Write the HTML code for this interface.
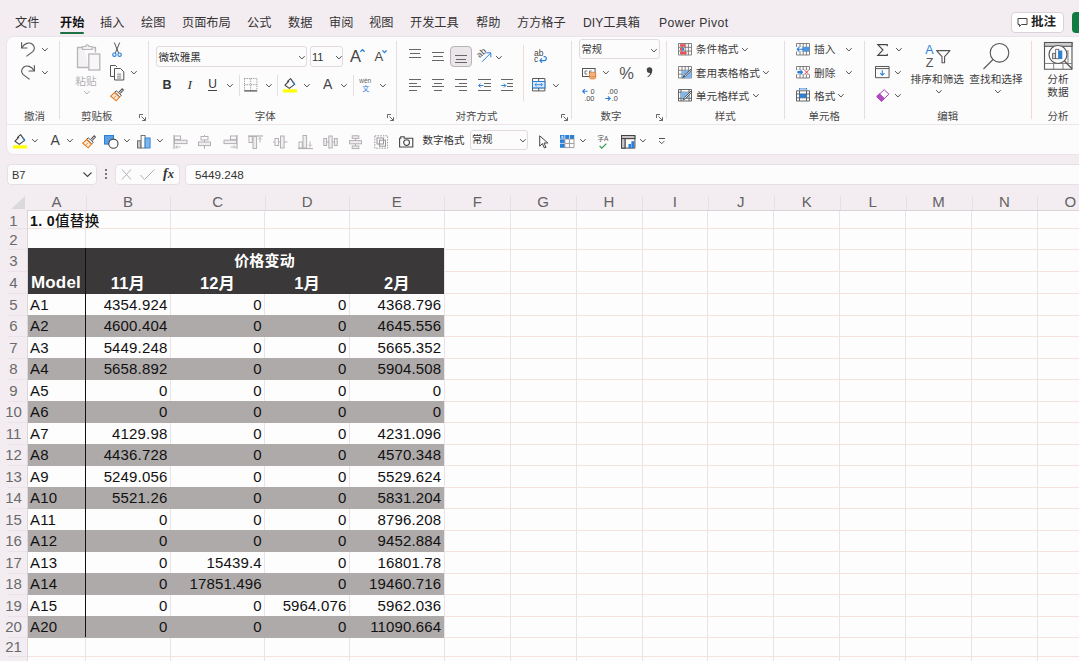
<!DOCTYPE html>
<html><head><meta charset="utf-8"><title>Excel</title>
<style>
*{box-sizing:border-box;margin:0;padding:0}
html,body{width:1079px;height:661px;overflow:hidden}
body{background:#f3edf2;font-family:"Liberation Sans","Noto Sans CJK SC",sans-serif;color:#222;position:relative;font-size:12px}
.abs{position:absolute}
.tab{position:absolute;top:15px;font-size:12.2px;line-height:16px;color:#333;white-space:nowrap}
.card{position:absolute;left:6px;top:36px;width:1090px;height:119px;background:#fdfcfd;border:1px solid #ebe4ea;border-radius:8px}
.glabel{position:absolute;top:109px;font-size:10.5px;line-height:13px;color:#4a4a4a;white-space:nowrap;transform:translateX(-50%)}
.sep{position:absolute;top:42px;width:1px;height:78px;background:#e3dde2}
.t{position:absolute;white-space:nowrap;line-height:14px}
.ch{position:absolute;top:193px;height:17px;font-size:15px;line-height:17px;color:#636363;text-align:center}
.rh{position:absolute;left:0;width:27px;font-size:15px;color:#6a6a6a;text-align:center}
.cell{position:absolute;font-size:15px;color:#111;white-space:nowrap;letter-spacing:0.15px;font-family:"Liberation Sans","Noto Sans CJK SC",sans-serif}
.num{text-align:right}
.hl{position:absolute;height:1px;background:#f3e3dc}
.vl{position:absolute;width:1px;background:#ece3ea}
svg{position:absolute;overflow:visible}
</style></head><body>

<div class="tab" style="left:15px">文件</div>
<div class="tab" style="left:60px;font-weight:bold;color:#111">开始</div>
<div class="tab" style="left:100px">插入</div>
<div class="tab" style="left:141px">绘图</div>
<div class="tab" style="left:182px">页面布局</div>
<div class="tab" style="left:247px">公式</div>
<div class="tab" style="left:288px">数据</div>
<div class="tab" style="left:329px">审阅</div>
<div class="tab" style="left:369px">视图</div>
<div class="tab" style="left:410px">开发工具</div>
<div class="tab" style="left:476px">帮助</div>
<div class="tab" style="left:517px">方方格子</div>
<div class="tab" style="left:583px">DIY工具箱</div>
<div class="tab" style="left:659px;letter-spacing:0.4px">Power Pivot</div>
<div class="abs" style="left:60px;top:31.5px;width:24px;height:2px;background:#1e7145;border-radius:1px"></div>
<div class="abs" style="left:1011px;top:12px;width:53px;height:21px;background:#fff;border:1px solid #d9d2d8;border-radius:4px"></div>
<svg style="left:1017px;top:17px" width="11" height="11" viewBox="0 0 11 11"><path d="M1 1.5h9v6h-5.5l-2 2v-2h-1.5z" fill="none" stroke="#444" stroke-width="1"/></svg>
<div class="t" style="left:1031px;top:15px;font-size:12.5px;font-weight:bold;color:#222">批注</div>
<div class="abs" style="left:1072px;top:12px;width:20px;height:21px;background:#107c41;border-radius:4px"></div>
<div class="card"></div>
<div class="abs" style="left:7px;top:124px;width:1072px;height:1px;background:#ece5ea"></div>
<svg style="left:21.0px;top:42.0px" width="14" height="15" viewBox="0 0 14 15"><path d="M0.6 0.3V6H6.4" fill="none" stroke="#555" stroke-width="1.1"/><path d="M0.9 5.7C3.2 1.2 8.2 -0.2 11.4 2.3C14 4.4 13.9 7.6 11.8 9.7L5.4 14.4" fill="none" stroke="#555" stroke-width="1.1"/></svg>
<svg style="left:42.1px;top:47.8px" width="5.8" height="3.4" viewBox="0 0 5.8 3.4"><path d="M0.4 0.4L2.90 3.00L5.40 0.4" fill="none" stroke="#505050" stroke-width="1.0" stroke-linecap="round" stroke-linejoin="round"/></svg>
<svg style="left:21.0px;top:64.5px" width="14" height="15" viewBox="0 0 14 15"><path d="M13.4 0.3V6H7.6" fill="none" stroke="#555" stroke-width="1.1"/><path d="M13.1 5.7C10.8 1.2 5.8 -0.2 2.6 2.3C0 4.4 0.1 7.6 2.2 9.7L8.6 14.4" fill="none" stroke="#555" stroke-width="1.1"/></svg>
<svg style="left:42.1px;top:70.8px" width="5.8" height="3.4" viewBox="0 0 5.8 3.4"><path d="M0.4 0.4L2.90 3.00L5.40 0.4" fill="none" stroke="#505050" stroke-width="1.0" stroke-linecap="round" stroke-linejoin="round"/></svg>
<div class="glabel" style="left:34.4px;top:109.5px">撤消</div>
<div class="abs" style="left:59.3px;top:41.0px;width:1px;height:78.0px;background:#e6dee4"></div>
<svg style="left:75.5px;top:43.5px" width="25" height="27" viewBox="0 0 25 27"><path d="M8 3.5h-6.5v20h11M17 3.5h2.5v5" fill="#f3f1f3" stroke="#b8b4b8" stroke-width="1.3"/><path d="M6.5 5.5v-3h3.2a1.6 1.6 0 0 1 3.2 0h3.2v3z" fill="#f3f1f3" stroke="#b8b4b8" stroke-width="1.2"/><rect x="12.8" y="10" width="11" height="16" fill="#f8f6f8" stroke="#b8b4b8" stroke-width="1.3"/></svg>
<div class="t" style="left:86.0px;top:73.5px;font-size:10.7px;color:#b3afb3;transform:translateX(-50%);">粘贴</div>
<svg style="left:84.1px;top:91.3px" width="5.8" height="3.4" viewBox="0 0 5.8 3.4"><path d="M0.4 0.4L2.90 3.00L5.40 0.4" fill="none" stroke="#b3afb3" stroke-width="1.0" stroke-linecap="round" stroke-linejoin="round"/></svg>
<svg style="left:112.0px;top:42.0px" width="10" height="15.5" viewBox="0 0 10 15.5"><path d="M2.3 0.5L6.6 11M7.7 0.5L3.4 11" fill="none" stroke="#555" stroke-width="1"/><circle cx="2.4" cy="12.7" r="1.7" fill="none" stroke="#2a7fd6" stroke-width="1.1"/><circle cx="7.6" cy="12.7" r="1.7" fill="none" stroke="#2a7fd6" stroke-width="1.1"/></svg>
<svg style="left:110.0px;top:65.0px" width="14.5" height="15.5" viewBox="0 0 14.5 15.5"><path d="M4.5 11.5h-4v-11h5l1.5 1.5" fill="none" stroke="#555" stroke-width="1"/><path d="M4.5 3.5h6l3.3 3.3v8.2h-9.3z" fill="#fdfcfd" stroke="#555" stroke-width="1"/><path d="M7.2 9.2h4M7.2 11.2h4M7.2 13.1h4" stroke="#555" stroke-width="0.7"/></svg>
<svg style="left:130.6px;top:70.8px" width="5.8" height="3.4" viewBox="0 0 5.8 3.4"><path d="M0.4 0.4L2.90 3.00L5.40 0.4" fill="none" stroke="#505050" stroke-width="1.0" stroke-linecap="round" stroke-linejoin="round"/></svg>
<svg style="left:110.3px;top:88.0px" width="14" height="13.5" viewBox="0 0 14 13.5"><path d="M9 4.2L12.2 0.8L13.4 2L10.3 5.4" fill="none" stroke="#555" stroke-width="1.1"/><path d="M6.2 2.8L11.3 7.2L9.8 8.8L4.7 4.4z" fill="#fdfcfd" stroke="#555" stroke-width="1"/><path d="M4.5 4.6L0.7 8.2L6.2 12.8L9.6 9z" fill="#fbe6d4" stroke="#e07a1f" stroke-width="1.1"/><path d="M3.4 10.4L6 8" stroke="#e07a1f" stroke-width="0.7"/></svg>
<div class="glabel" style="left:96.7px;top:109.5px">剪贴板</div>
<svg style="left:138.5px;top:114.0px" width="7" height="7" viewBox="0 0 7 7"><path d="M0.5 4V0.5H4M2.5 2.5L6.3 6.3M6.5 3.2V6.5H3.2" fill="none" stroke="#555" stroke-width="0.9"/></svg>
<div class="abs" style="left:148.0px;top:41.0px;width:1px;height:78.0px;background:#e6dee4"></div>
<div class="abs" style="left:156.0px;top:46.0px;width:150.7px;height:21.3px;background:#fdfcfd;border:1px solid #e3d9e0;border-radius:3px"></div>
<div class="t" style="left:158.5px;top:50.0px;font-size:10.6px;color:#333;">微软雅黑</div>
<svg style="left:299.1px;top:55.6px" width="5.8" height="3.4" viewBox="0 0 5.8 3.4"><path d="M0.4 0.4L2.90 3.00L5.40 0.4" fill="none" stroke="#505050" stroke-width="1.0" stroke-linecap="round" stroke-linejoin="round"/></svg>
<div class="abs" style="left:309.5px;top:46.0px;width:33.9px;height:21.3px;background:#fdfcfd;border:1px solid #e3d9e0;border-radius:3px"></div>
<div class="t" style="left:312.0px;top:50.0px;font-size:11.0px;color:#333;">11</div>
<svg style="left:335.8px;top:55.6px" width="5.8" height="3.4" viewBox="0 0 5.8 3.4"><path d="M0.4 0.4L2.90 3.00L5.40 0.4" fill="none" stroke="#505050" stroke-width="1.0" stroke-linecap="round" stroke-linejoin="round"/></svg>
<div class="t" style="left:350.0px;top:48.5px;font-size:16.5px;color:#444;line-height:18px;margin-top:-2px">A</div>
<svg style="left:359.6px;top:49.3px" width="5" height="3.2" viewBox="0 0 5 3.2"><path d="M0.4 2.8L2.5 0.6L4.6 2.8" fill="none" stroke="#2a7fd6" stroke-width="1.3"/></svg>
<div class="t" style="left:374.4px;top:50.0px;font-size:13.0px;color:#444;line-height:14px">A</div>
<svg style="left:382.4px;top:49.6px" width="5" height="3.2" viewBox="0 0 5 3.2"><path d="M0.4 0.4L2.5 2.6L4.6 0.4" fill="none" stroke="#2a7fd6" stroke-width="1.3"/></svg>
<div class="t" style="left:167.0px;top:77.5px;font-size:12.5px;color:#333;transform:translateX(-50%);font-weight:bold">B</div>
<div class="t" style="left:189.8px;top:77.5px;font-size:12.5px;color:#333;transform:translateX(-50%);font-style:italic;font-family:'Liberation Serif',serif;font-size:13.5px">I</div>
<div class="t" style="left:212.5px;top:77.2px;font-size:12.0px;color:#333;transform:translateX(-50%);">U</div>
<div class="abs" style="left:208.3px;top:90px;width:8.4px;height:1px;background:#444"></div>
<svg style="left:226.7px;top:83.8px" width="5.8" height="3.4" viewBox="0 0 5.8 3.4"><path d="M0.4 0.4L2.90 3.00L5.40 0.4" fill="none" stroke="#505050" stroke-width="1.0" stroke-linecap="round" stroke-linejoin="round"/></svg>
<div class="abs" style="left:239.1px;top:75.0px;width:1px;height:21.0px;background:#e6dee4"></div>
<svg style="left:244.4px;top:78.4px" width="13.4" height="13.4" viewBox="0 0 13.4 13.4"><path d="M0.5 0.5h12.4v12.4h-12.4zM6.7 0.5v12.4M0.5 6.7h12.4" fill="none" stroke="#8f8b8f" stroke-width="0.9" stroke-dasharray="1.2 1"/><path d="M0.3 12.9h12.8" stroke="#555" stroke-width="1.2"/></svg>
<svg style="left:265.6px;top:83.8px" width="5.8" height="3.4" viewBox="0 0 5.8 3.4"><path d="M0.4 0.4L2.90 3.00L5.40 0.4" fill="none" stroke="#505050" stroke-width="1.0" stroke-linecap="round" stroke-linejoin="round"/></svg>
<div class="abs" style="left:276.9px;top:75.0px;width:1px;height:21.0px;background:#e6dee4"></div>
<svg style="left:283.3px;top:77.7px" width="14" height="15" viewBox="0 0 14 15"><path d="M4.2 3.6L7.6 0.6L11.6 6.4L6.3 10.4L2 7.2L6 3" fill="none" stroke="#444" stroke-width="1.1" stroke-linejoin="round"/><path d="M9.6 3.4c1.7 0.1 2.8 1.5 2.7 4.2c-0.5-1-1.2-1.6-2.2-1.9z" fill="#2a7fd6"/><rect x="0" y="11.3" width="14" height="3.2" fill="#ffff00"/></svg>
<svg style="left:304.4px;top:83.8px" width="5.8" height="3.4" viewBox="0 0 5.8 3.4"><path d="M0.4 0.4L2.90 3.00L5.40 0.4" fill="none" stroke="#505050" stroke-width="1.0" stroke-linecap="round" stroke-linejoin="round"/></svg>
<div class="t" style="left:323.0px;top:76.5px;font-size:14.0px;color:#444;line-height:15px">A</div>
<svg style="left:340.7px;top:83.8px" width="5.8" height="3.4" viewBox="0 0 5.8 3.4"><path d="M0.4 0.4L2.90 3.00L5.40 0.4" fill="none" stroke="#505050" stroke-width="1.0" stroke-linecap="round" stroke-linejoin="round"/></svg>
<div class="abs" style="left:352.7px;top:75.0px;width:1px;height:21.0px;background:#e6dee4"></div>
<div class="t" style="left:359.3px;top:74.3px;font-size:6.5px;color:#666;line-height:8px;margin-top:3px">wén</div>
<div class="t" style="left:362.3px;top:82.2px;font-size:7.0px;color:#2a7fd6;line-height:8px;margin-top:3px">文</div>
<svg style="left:379.5px;top:83.8px" width="5.8" height="3.4" viewBox="0 0 5.8 3.4"><path d="M0.4 0.4L2.90 3.00L5.40 0.4" fill="none" stroke="#505050" stroke-width="1.0" stroke-linecap="round" stroke-linejoin="round"/></svg>
<div class="glabel" style="left:265.3px;top:109.5px">字体</div>
<svg style="left:386.5px;top:114.0px" width="7" height="7" viewBox="0 0 7 7"><path d="M0.5 4V0.5H4M2.5 2.5L6.3 6.3M6.5 3.2V6.5H3.2" fill="none" stroke="#555" stroke-width="0.9"/></svg>
<div class="abs" style="left:396.2px;top:41.0px;width:1px;height:78.0px;background:#e6dee4"></div>
<div class="abs" style="left:408.5px;top:49.0px;width:12.8px;height:1.1px;background:#666"></div>
<div class="abs" style="left:410.0px;top:52.9px;width:9.8px;height:1.1px;background:#666"></div>
<div class="abs" style="left:408.5px;top:56.6px;width:12.8px;height:1.1px;background:#666"></div>
<div class="abs" style="left:431.6px;top:51.8px;width:12.8px;height:1.1px;background:#666"></div>
<div class="abs" style="left:433.1px;top:55.7px;width:9.8px;height:1.1px;background:#666"></div>
<div class="abs" style="left:431.6px;top:59.5px;width:12.8px;height:1.1px;background:#666"></div>
<div class="abs" style="left:450.4px;top:46.0px;width:21.4px;height:21.3px;background:#ebe6ea;border:1px solid #b8b3b7;border-radius:4px"></div>
<div class="abs" style="left:454.7px;top:55.0px;width:12.8px;height:1.1px;background:#666"></div>
<div class="abs" style="left:456.2px;top:58.7px;width:9.8px;height:1.1px;background:#666"></div>
<div class="abs" style="left:454.7px;top:62.2px;width:12.8px;height:1.1px;background:#666"></div>
<svg style="left:477.0px;top:49.0px" width="15" height="13.5" viewBox="0 0 15 13.5"><text x="0" y="0" font-size="8.6" font-family="Liberation Sans,sans-serif" fill="#444" transform="translate(2.6 9.2) rotate(-42)">ab</text><path d="M5 12.8L13.6 4.2M9.4 3.8h4.4v4.4" fill="none" stroke="#2a7fd6" stroke-width="1"/></svg>
<svg style="left:496.4px;top:55.6px" width="5.8" height="3.4" viewBox="0 0 5.8 3.4"><path d="M0.4 0.4L2.90 3.00L5.40 0.4" fill="none" stroke="#505050" stroke-width="1.0" stroke-linecap="round" stroke-linejoin="round"/></svg>
<div class="abs" style="left:408.5px;top:79.0px;width:12.8px;height:1.1px;background:#666"></div>
<div class="abs" style="left:408.5px;top:82.7px;width:8.3px;height:1.1px;background:#666"></div>
<div class="abs" style="left:408.5px;top:86.2px;width:12.8px;height:1.1px;background:#666"></div>
<div class="abs" style="left:408.5px;top:90.0px;width:8.3px;height:1.1px;background:#666"></div>
<div class="abs" style="left:431.6px;top:79.0px;width:12.8px;height:1.1px;background:#666"></div>
<div class="abs" style="left:433.6px;top:82.7px;width:8.8px;height:1.1px;background:#666"></div>
<div class="abs" style="left:431.6px;top:86.2px;width:12.8px;height:1.1px;background:#666"></div>
<div class="abs" style="left:433.6px;top:90.0px;width:8.8px;height:1.1px;background:#666"></div>
<div class="abs" style="left:454.5px;top:79.0px;width:12.8px;height:1.1px;background:#666"></div>
<div class="abs" style="left:459.0px;top:82.7px;width:8.3px;height:1.1px;background:#666"></div>
<div class="abs" style="left:454.5px;top:86.2px;width:12.8px;height:1.1px;background:#666"></div>
<div class="abs" style="left:459.0px;top:90.0px;width:8.3px;height:1.1px;background:#666"></div>
<div class="abs" style="left:477.8px;top:79.0px;width:12.8px;height:1.1px;background:#666"></div>
<div class="abs" style="left:483.8px;top:82.7px;width:6.8px;height:1.1px;background:#666"></div>
<div class="abs" style="left:483.8px;top:86.2px;width:6.8px;height:1.1px;background:#666"></div>
<div class="abs" style="left:477.8px;top:90.0px;width:12.8px;height:1.1px;background:#666"></div>
<svg style="left:477.8px;top:82.5px" width="5.5" height="5" viewBox="0 0 5.5 5"><path d="M5.3 2.5H0.8M2.6 0.5L0.6 2.5L2.6 4.5" fill="none" stroke="#2a7fd6" stroke-width="1"/></svg>
<div class="abs" style="left:500.7px;top:79.0px;width:12.8px;height:1.1px;background:#666"></div>
<div class="abs" style="left:506.7px;top:82.7px;width:6.8px;height:1.1px;background:#666"></div>
<div class="abs" style="left:506.7px;top:86.2px;width:6.8px;height:1.1px;background:#666"></div>
<div class="abs" style="left:500.7px;top:90.0px;width:12.8px;height:1.1px;background:#666"></div>
<svg style="left:500.7px;top:82.5px" width="5.5" height="5" viewBox="0 0 5.5 5"><path d="M0.2 2.5H4.7M2.9 0.5L4.9 2.5L2.9 4.5" fill="none" stroke="#2a7fd6" stroke-width="1"/></svg>
<div class="abs" style="left:522.5px;top:45.0px;width:1px;height:55.7px;background:#f0ddd2"></div>
<div class="t" style="left:534.0px;top:46.5px;font-size:8.5px;color:#444;line-height:9px;margin-top:2.5px">ab</div>
<div class="t" style="left:534.0px;top:52.8px;font-size:8.5px;color:#444;line-height:9px;margin-top:2.5px">c</div>
<svg style="left:538.6px;top:56.2px" width="8" height="7.5" viewBox="0 0 8 7.5"><path d="M4.6 0.6h0.8c2.6 0 2.6 4 0 4H1M3 2.4L0.9 4.6L3 6.8" fill="none" stroke="#2a7fd6" stroke-width="1.1"/></svg>
<svg style="left:532.0px;top:78.2px" width="13.4" height="13.4" viewBox="0 0 13.4 13.4"><path d="M0.5 0.5h12.4v12.4h-12.4zM0.5 3.5h12.4M0.5 9.9h12.4M6.7 0.5v3M6.7 9.9v3" fill="none" stroke="#555" stroke-width="1"/><rect x="0.5" y="3.5" width="12.4" height="6.4" fill="#dbeaf9" stroke="#2a7fd6" stroke-width="1"/><path d="M3 6.7h7.4M4.6 5.1L3 6.7L4.6 8.3M8.8 5.1L10.4 6.7L8.8 8.3" fill="none" stroke="#2a7fd6" stroke-width="0.9"/></svg>
<svg style="left:552.9px;top:83.8px" width="5.8" height="3.4" viewBox="0 0 5.8 3.4"><path d="M0.4 0.4L2.90 3.00L5.40 0.4" fill="none" stroke="#505050" stroke-width="1.0" stroke-linecap="round" stroke-linejoin="round"/></svg>
<div class="glabel" style="left:476.4px;top:109.5px">对齐方式</div>
<svg style="left:561.0px;top:114.0px" width="7" height="7" viewBox="0 0 7 7"><path d="M0.5 4V0.5H4M2.5 2.5L6.3 6.3M6.5 3.2V6.5H3.2" fill="none" stroke="#555" stroke-width="0.9"/></svg>
<div class="abs" style="left:570.5px;top:41.0px;width:1px;height:78.0px;background:#e6dee4"></div>
<div class="abs" style="left:578.7px;top:39.0px;width:80.9px;height:20.0px;background:#fdfcfd;border:1px solid #e3d9e0;border-radius:3px"></div>
<div class="t" style="left:581.5px;top:43.0px;font-size:10.3px;color:#333;">常规</div>
<svg style="left:651.1px;top:48.6px" width="5.8" height="3.4" viewBox="0 0 5.8 3.4"><path d="M0.4 0.4L2.90 3.00L5.40 0.4" fill="none" stroke="#505050" stroke-width="1.0" stroke-linecap="round" stroke-linejoin="round"/></svg>
<svg style="left:582.0px;top:67.7px" width="14.5" height="11.5" viewBox="0 0 14.5 11.5"><rect x="0.5" y="0.5" width="12.6" height="8" fill="#fdfcfd" stroke="#555" stroke-width="1"/><path d="M3 3h2.2M3 6h2.2M3 3v3M7.5 3h2.2M7.5 3v3" stroke="#555" stroke-width="0.8" fill="none"/><ellipse cx="10.6" cy="5.5" rx="3.1" ry="1.3" fill="#f4b183" stroke="#e07a1f" stroke-width="0.8"/><path d="M7.5 5.5v4.2c0 1.7 6.2 1.7 6.2 0v-4.2" fill="#f4b183" stroke="#e07a1f" stroke-width="0.8"/><path d="M7.5 7.6c0 1.6 6.2 1.6 6.2 0" fill="none" stroke="#e07a1f" stroke-width="0.8"/></svg>
<svg style="left:603.1px;top:70.8px" width="5.8" height="3.4" viewBox="0 0 5.8 3.4"><path d="M0.4 0.4L2.90 3.00L5.40 0.4" fill="none" stroke="#505050" stroke-width="1.0" stroke-linecap="round" stroke-linejoin="round"/></svg>
<div class="t" style="left:619.2px;top:65.5px;font-size:16.5px;color:#555;line-height:18px;margin-top:-2px">%</div>
<svg style="left:645.7px;top:67.3px" width="7" height="10.5" viewBox="0 0 7 10.5"><path d="M3.4 0.3a2.7 2.7 0 0 1 2.9 2.9c0 3-1.8 5.6-4.4 7l-0.5-0.7c1.6-1 2.5-2.2 2.7-3.6c-2 0.3-3.3-0.9-3.3-2.7a2.7 2.7 0 0 1 2.6-2.9z" fill="#444"/></svg>
<svg style="left:582.3px;top:88.0px" width="13.5" height="13.5" viewBox="0 0 13.5 13.5"><path d="M5.6 3.3H0.8M2.9 1.1L0.7 3.3L2.9 5.5" fill="none" stroke="#2a7fd6" stroke-width="1.1"/><text x="8.6" y="6" font-size="7.3" font-family="Liberation Sans,sans-serif" fill="#444">0</text><text x="2.2" y="13.3" font-size="7.3" font-family="Liberation Sans,sans-serif" fill="#444">.00</text></svg>
<svg style="left:605.4px;top:88.0px" width="13.8" height="13.5" viewBox="0 0 13.8 13.5"><text x="2.6" y="6" font-size="7.3" font-family="Liberation Sans,sans-serif" fill="#444">.00</text><path d="M0.3 10.5H5.1M3 8.3L5.2 10.5L3 12.7" fill="none" stroke="#2a7fd6" stroke-width="1.1"/><text x="6.8" y="13.3" font-size="7.3" font-family="Liberation Sans,sans-serif" fill="#444">.0</text></svg>
<div class="glabel" style="left:611.0px;top:109.5px">数字</div>
<svg style="left:656.3px;top:114.0px" width="7" height="7" viewBox="0 0 7 7"><path d="M0.5 4V0.5H4M2.5 2.5L6.3 6.3M6.5 3.2V6.5H3.2" fill="none" stroke="#555" stroke-width="0.9"/></svg>
<div class="abs" style="left:665.9px;top:41.0px;width:1px;height:78.0px;background:#e6dee4"></div>
<svg style="left:678.0px;top:43.2px" width="14" height="12.5" viewBox="0 0 14 12.5"><path d="M0.5 0.5h13v11.5h-13zM0.5 4.3h13M0.5 8.1h13M4 0.5v11.5M7.2 0.5v11.5M10.4 0.5v11.5" fill="#fdfcfd" stroke="#666" stroke-width="0.8"/><rect x="2" y="1.2" width="5.4" height="2.5" fill="#e8505b"/><rect x="2" y="5" width="2.4" height="2.5" fill="#e8505b"/><rect x="4.4" y="5" width="1.6" height="2.5" fill="#2a7fd6"/><rect x="2" y="8.8" width="6.6" height="2.5" fill="#e8505b"/></svg>
<div class="t" style="left:695.8px;top:42.3px;font-size:10.7px;color:#3d3d3d;">条件格式</div>
<svg style="left:741.8px;top:47.8px" width="5.8" height="3.4" viewBox="0 0 5.8 3.4"><path d="M0.4 0.4L2.90 3.00L5.40 0.4" fill="none" stroke="#505050" stroke-width="1.0" stroke-linecap="round" stroke-linejoin="round"/></svg>
<svg style="left:678.0px;top:66.3px" width="14" height="12.5" viewBox="0 0 14 12.5"><path d="M0.5 0.5h13v11.5h-13zM0.5 4.3h13M0.5 8.1h13M4 0.5v11.5M7.2 0.5v11.5M10.4 0.5v11.5" fill="#fdfcfd" stroke="#666" stroke-width="0.8"/><path d="M4.2 4.5h9.3v7.5h-9.3z" fill="#7fb6ec"/><path d="M12.8 3.2L6.5 9.2L4.8 11.6L7.4 10.2L13.6 4.2z" fill="#fdfcfd" stroke="#444" stroke-width="0.9"/></svg>
<div class="t" style="left:695.8px;top:65.5px;font-size:10.7px;color:#3d3d3d;">套用表格格式</div>
<svg style="left:762.9px;top:71.0px" width="5.8" height="3.4" viewBox="0 0 5.8 3.4"><path d="M0.4 0.4L2.90 3.00L5.40 0.4" fill="none" stroke="#505050" stroke-width="1.0" stroke-linecap="round" stroke-linejoin="round"/></svg>
<svg style="left:678.0px;top:88.9px" width="14" height="12.5" viewBox="0 0 14 12.5"><path d="M0.5 0.5h13v11.5h-13zM0.5 3.2h13M0.5 9.3h13M3 0.5v11.5M11 0.5v11.5" fill="#fdfcfd" stroke="#555" stroke-width="0.9"/><rect x="3" y="3.2" width="8" height="6.1" fill="#7fb6ec"/><path d="M12.8 2.2L6.5 8.7L4.8 11.2L7.4 9.8L13.6 3.2z" fill="#fdfcfd" stroke="#444" stroke-width="0.9"/></svg>
<div class="t" style="left:695.8px;top:88.5px;font-size:10.7px;color:#3d3d3d;">单元格样式</div>
<svg style="left:752.5px;top:94.0px" width="5.8" height="3.4" viewBox="0 0 5.8 3.4"><path d="M0.4 0.4L2.90 3.00L5.40 0.4" fill="none" stroke="#505050" stroke-width="1.0" stroke-linecap="round" stroke-linejoin="round"/></svg>
<div class="glabel" style="left:725.2px;top:109.5px">样式</div>
<div class="abs" style="left:784.1px;top:41.0px;width:1px;height:78.0px;background:#e6dee4"></div>
<svg style="left:795.7px;top:43.2px" width="14" height="12.5" viewBox="0 0 14 12.5"><path d="M0.5 0.5h13v11.5h-13zM0.5 4.3h13M0.5 8.1h13M4 0.5v11.5M7.2 0.5v11.5M10.4 0.5v11.5" fill="#fdfcfd" stroke="#666" stroke-width="0.8"/><rect x="0" y="3.9" width="7" height="4.6" fill="#fdfcfd"/><rect x="6.2" y="4" width="7.2" height="4.3" fill="#4a96e4"/><path d="M7.5 6.2H1.2M3.4 4.1L1.2 6.2L3.4 8.3" fill="none" stroke="#2a7fd6" stroke-width="1.1"/></svg>
<div class="t" style="left:814.0px;top:42.3px;font-size:10.7px;color:#3d3d3d;">插入</div>
<svg style="left:846.1px;top:47.8px" width="5.8" height="3.4" viewBox="0 0 5.8 3.4"><path d="M0.4 0.4L2.90 3.00L5.40 0.4" fill="none" stroke="#505050" stroke-width="1.0" stroke-linecap="round" stroke-linejoin="round"/></svg>
<svg style="left:795.7px;top:66.3px" width="14" height="12.5" viewBox="0 0 14 12.5"><path d="M0.5 0.5h13v11.5h-13zM0.5 4.3h13M0.5 8.1h13M4 0.5v11.5M7.2 0.5v11.5M10.4 0.5v11.5" fill="#fdfcfd" stroke="#666" stroke-width="0.8"/><rect x="0" y="4" width="14" height="4.4" fill="#fdfcfd"/><path d="M1 6.2h5.5M4.6 4.3L6.5 6.2L4.6 8.1" fill="none" stroke="#2a7fd6" stroke-width="1.2"/><rect x="2" y="4.9" width="3" height="2.6" fill="#2a7fd6"/><path d="M8.6 4.2l4 4M12.6 4.2l-4 4" stroke="#e8303b" stroke-width="1"/></svg>
<div class="t" style="left:814.0px;top:65.5px;font-size:10.7px;color:#3d3d3d;">删除</div>
<svg style="left:846.1px;top:71.0px" width="5.8" height="3.4" viewBox="0 0 5.8 3.4"><path d="M0.4 0.4L2.90 3.00L5.40 0.4" fill="none" stroke="#505050" stroke-width="1.0" stroke-linecap="round" stroke-linejoin="round"/></svg>
<svg style="left:795.7px;top:88.0px" width="14" height="13.5" viewBox="0 0 14 13.5"><path d="M0.5 2.8h13v10.2h-13zM0.5 6h13M0.5 9.8h13M3.5 2.8v10.2M10.5 2.8v10.2" fill="#fdfcfd" stroke="#555" stroke-width="0.9"/><rect x="3.5" y="6" width="7" height="3.8" fill="#2a7fd6"/><path d="M3.5 0.9h7M3.5 0v1.8M10.5 0v1.8" stroke="#2a7fd6" stroke-width="0.9"/></svg>
<div class="t" style="left:814.0px;top:88.5px;font-size:10.7px;color:#3d3d3d;">格式</div>
<svg style="left:838.1px;top:94.0px" width="5.8" height="3.4" viewBox="0 0 5.8 3.4"><path d="M0.4 0.4L2.90 3.00L5.40 0.4" fill="none" stroke="#505050" stroke-width="1.0" stroke-linecap="round" stroke-linejoin="round"/></svg>
<div class="glabel" style="left:824.2px;top:109.5px">单元格</div>
<div class="abs" style="left:863.9px;top:41.0px;width:1px;height:78.0px;background:#e6dee4"></div>
<svg style="left:877.4px;top:43.6px" width="11" height="12" viewBox="0 0 11 12"><path d="M10.3 2.2V0.6H0.8L6 6L0.8 11.4H10.3V9.8" fill="none" stroke="#444" stroke-width="1.1" stroke-linejoin="miter"/></svg>
<svg style="left:896.4px;top:47.8px" width="5.8" height="3.4" viewBox="0 0 5.8 3.4"><path d="M0.4 0.4L2.90 3.00L5.40 0.4" fill="none" stroke="#505050" stroke-width="1.0" stroke-linecap="round" stroke-linejoin="round"/></svg>
<svg style="left:875.3px;top:66.3px" width="14.6" height="12.2" viewBox="0 0 14.6 12.2"><path d="M0.5 0.5h13.6v11.2h-13.6zM0.5 2.6h13.6" fill="#fdfcfd" stroke="#555" stroke-width="1"/><path d="M7.3 4.2v5M5.2 7.2L7.3 9.3L9.4 7.2" fill="none" stroke="#2a7fd6" stroke-width="1.1"/></svg>
<svg style="left:895.1px;top:71.0px" width="5.8" height="3.4" viewBox="0 0 5.8 3.4"><path d="M0.4 0.4L2.90 3.00L5.40 0.4" fill="none" stroke="#505050" stroke-width="1.0" stroke-linecap="round" stroke-linejoin="round"/></svg>
<svg style="left:875.7px;top:88.9px" width="13.6" height="12.8" viewBox="0 0 13.6 12.8"><path d="M8.2 0.7L12.9 5.2L5.6 12.2L0.8 7.6z" fill="#fdfcfd" stroke="#a040b0" stroke-width="1"/><path d="M3.6 4.9L8.3 9.5L5.6 12.2L0.8 7.6z" fill="#b34cc4" stroke="#a040b0" stroke-width="1"/></svg>
<svg style="left:895.1px;top:94.0px" width="5.8" height="3.4" viewBox="0 0 5.8 3.4"><path d="M0.4 0.4L2.90 3.00L5.40 0.4" fill="none" stroke="#505050" stroke-width="1.0" stroke-linecap="round" stroke-linejoin="round"/></svg>
<div class="t" style="left:925.2px;top:42.5px;font-size:12.5px;color:#2a7fd6;line-height:14px">A</div>
<div class="t" style="left:925.7px;top:55.8px;font-size:12.5px;color:#555;line-height:14px">Z</div>
<svg style="left:936.0px;top:50.0px" width="14.6" height="13.4" viewBox="0 0 14.6 13.4"><path d="M0.6 0.6H14L8.6 6.6V12.8H6V6.6z" fill="none" stroke="#555" stroke-width="1.1" stroke-linejoin="round"/></svg>
<div class="t" style="left:937.3px;top:72.0px;font-size:10.7px;color:#3d3d3d;transform:translateX(-50%);">排序和筛选</div>
<svg style="left:935.6px;top:90.3px" width="5.8" height="3.4" viewBox="0 0 5.8 3.4"><path d="M0.4 0.4L2.90 3.00L5.40 0.4" fill="none" stroke="#505050" stroke-width="1.0" stroke-linecap="round" stroke-linejoin="round"/></svg>
<svg style="left:983.0px;top:43.0px" width="27" height="27" viewBox="0 0 27 27"><circle cx="16.5" cy="9.8" r="9.3" fill="none" stroke="#555" stroke-width="1.1"/><path d="M10 16.5L0.5 26" stroke="#555" stroke-width="1.1"/></svg>
<div class="t" style="left:996.0px;top:72.0px;font-size:10.7px;color:#3d3d3d;transform:translateX(-50%);">查找和选择</div>
<svg style="left:994.6px;top:90.3px" width="5.8" height="3.4" viewBox="0 0 5.8 3.4"><path d="M0.4 0.4L2.90 3.00L5.40 0.4" fill="none" stroke="#505050" stroke-width="1.0" stroke-linecap="round" stroke-linejoin="round"/></svg>
<div class="glabel" style="left:947.8px;top:109.5px">编辑</div>
<div class="abs" style="left:1031.3px;top:41.0px;width:1px;height:78.0px;background:#f0ddd2"></div>
<svg style="left:1044.0px;top:42.3px" width="28.5" height="27.7" viewBox="0 0 28.5 27.7"><path d="M0.5 0.5h27.5v26.7h-27.5z" fill="#fdfcfd" stroke="#555" stroke-width="1.1"/><rect x="0.5" y="0.5" width="27.5" height="3.8" fill="#d0cdd0" stroke="#555" stroke-width="1.1"/><path d="M0.5 21.5h27.5M9.7 21.5v5.7M19 21.5v5.7M24 8v13" stroke="#777" stroke-width="0.9"/><circle cx="14" cy="12.5" r="9" fill="#fdfcfd" stroke="#555" stroke-width="1.2"/><rect x="8.6" y="11.3" width="3.1" height="5.4" fill="#d0cdd0" stroke="#555" stroke-width="0.8"/><rect x="11.7" y="7.3" width="3.1" height="9.4" fill="#fdfcfd" stroke="#555" stroke-width="0.8"/><rect x="14.8" y="9" width="3.1" height="7.7" fill="#2a7fd6" stroke="#2a7fd6" stroke-width="0.8"/><path d="M20.5 19L28 26.7" stroke="#555" stroke-width="1.3"/></svg>
<div class="t" style="left:1058.0px;top:72.0px;font-size:10.7px;color:#3d3d3d;transform:translateX(-50%);">分析</div>
<div class="t" style="left:1058.0px;top:84.8px;font-size:10.7px;color:#3d3d3d;transform:translateX(-50%);">数据</div>
<div class="glabel" style="left:1058.0px;top:109.5px">分析</div>
<svg style="left:13.2px;top:134.3px" width="14" height="15" viewBox="0 0 14 15"><path d="M4.2 3.6L7.6 0.6L11.6 6.4L6.3 10.4L2 7.2L6 3" fill="none" stroke="#444" stroke-width="1.1" stroke-linejoin="round"/><path d="M9.6 3.4c1.7 0.1 2.8 1.5 2.7 4.2c-0.5-1-1.2-1.6-2.2-1.9z" fill="#2a7fd6"/><rect x="0" y="11.3" width="14" height="3.2" fill="#ffff00"/></svg>
<svg style="left:32.4px;top:138.8px" width="5.8" height="3.4" viewBox="0 0 5.8 3.4"><path d="M0.4 0.4L2.90 3.00L5.40 0.4" fill="none" stroke="#505050" stroke-width="1.0" stroke-linecap="round" stroke-linejoin="round"/></svg>
<div class="t" style="left:50.6px;top:132.8px;font-size:14.0px;color:#444;line-height:15px">A</div>
<svg style="left:66.8px;top:138.8px" width="5.8" height="3.4" viewBox="0 0 5.8 3.4"><path d="M0.4 0.4L2.90 3.00L5.40 0.4" fill="none" stroke="#505050" stroke-width="1.0" stroke-linecap="round" stroke-linejoin="round"/></svg>
<svg style="left:82.4px;top:134.6px" width="14" height="13.5" viewBox="0 0 14 13.5"><path d="M9 4.2L12.2 0.8L13.4 2L10.3 5.4" fill="none" stroke="#555" stroke-width="1.1"/><path d="M6.2 2.8L11.3 7.2L9.8 8.8L4.7 4.4z" fill="#fdfcfd" stroke="#555" stroke-width="1"/><path d="M4.5 4.6L0.7 8.2L6.2 12.8L9.6 9z" fill="#fbe6d4" stroke="#e07a1f" stroke-width="1.1"/><path d="M3.4 10.4L6 8" stroke="#e07a1f" stroke-width="0.7"/></svg>
<svg style="left:104.0px;top:135.0px" width="15" height="14" viewBox="0 0 15 14"><rect x="0.5" y="0.5" width="9" height="8.6" fill="#5b9fe6" stroke="#2a7fd6" stroke-width="1"/><circle cx="9.4" cy="8.7" r="4.6" fill="#fdfcfd" stroke="#444" stroke-width="1.1"/></svg>
<svg style="left:124.1px;top:138.8px" width="5.8" height="3.4" viewBox="0 0 5.8 3.4"><path d="M0.4 0.4L2.90 3.00L5.40 0.4" fill="none" stroke="#505050" stroke-width="1.0" stroke-linecap="round" stroke-linejoin="round"/></svg>
<svg style="left:137.0px;top:135.3px" width="14" height="13.5" viewBox="0 0 14 13.5"><rect x="0.5" y="5.8" width="3.6" height="7.2" fill="#c8c5c8" stroke="#666" stroke-width="0.9"/><rect x="4.1" y="0.5" width="4" height="12.5" fill="#fdfcfd" stroke="#666" stroke-width="0.9"/><rect x="8.1" y="3" width="5" height="10" fill="#7fb6ec" stroke="#2a7fd6" stroke-width="0.9"/></svg>
<svg style="left:157.1px;top:138.8px" width="5.8" height="3.4" viewBox="0 0 5.8 3.4"><path d="M0.4 0.4L2.90 3.00L5.40 0.4" fill="none" stroke="#505050" stroke-width="1.0" stroke-linecap="round" stroke-linejoin="round"/></svg>
<svg style="left:172.5px;top:134.8px" width="15" height="14" viewBox="0 0 15 14"><path d="M1 0v14" stroke="#b3afb3" stroke-width="1.2"/><rect x="1.5" y="1" width="6" height="3.4" fill="none" stroke="#b3afb3" stroke-width="1"/><rect x="1.5" y="5.2" width="12.5" height="3.4" fill="#efedef" stroke="#b3afb3" stroke-width="1"/><path d="M7.5 12H2.5M4.3 10.4L2.6 12L4.3 13.6" fill="none" stroke="#b3afb3" stroke-width="0.9"/></svg>
<svg style="left:198.3px;top:134.8px" width="13" height="14" viewBox="0 0 13 14"><path d="M6.5 0v14" stroke="#b3afb3" stroke-width="1"/><rect x="3" y="1.5" width="7" height="3.4" fill="#fdfcfd" stroke="#b3afb3" stroke-width="1"/><rect x="0.5" y="7" width="12" height="3.6" fill="#efedef" stroke="#b3afb3" stroke-width="1"/></svg>
<svg style="left:223.0px;top:134.8px" width="15" height="14" viewBox="0 0 15 14"><path d="M14 0v14" stroke="#b3afb3" stroke-width="1.2"/><rect x="7.5" y="1" width="6" height="3.4" fill="none" stroke="#b3afb3" stroke-width="1"/><rect x="1" y="5.2" width="12.5" height="3.4" fill="#efedef" stroke="#b3afb3" stroke-width="1"/><path d="M7.5 12H12.5M10.7 10.4L12.4 12L10.7 13.6" fill="none" stroke="#b3afb3" stroke-width="0.9"/></svg>
<svg style="left:248.0px;top:134.8px" width="15" height="14" viewBox="0 0 15 14"><path d="M0 1h15" stroke="#b3afb3" stroke-width="1.2"/><rect x="1" y="1.5" width="3.2" height="6" fill="none" stroke="#b3afb3" stroke-width="1"/><rect x="5" y="1.5" width="3.6" height="12" fill="#efedef" stroke="#b3afb3" stroke-width="1"/><path d="M12 7.5V2.5M10.4 4.3L12 2.6L13.6 4.3" fill="none" stroke="#b3afb3" stroke-width="0.9"/></svg>
<svg style="left:273.3px;top:134.8px" width="14.5" height="14" viewBox="0 0 14.5 14"><path d="M0 7h14.5" stroke="#b3afb3" stroke-width="1"/><rect x="2" y="3.5" width="3.4" height="7" fill="#fdfcfd" stroke="#b3afb3" stroke-width="1"/><rect x="7.5" y="1" width="3.6" height="12" fill="#efedef" stroke="#b3afb3" stroke-width="1"/></svg>
<svg style="left:297.8px;top:134.8px" width="15" height="14" viewBox="0 0 15 14"><path d="M0 13.5h15" stroke="#b3afb3" stroke-width="1.2"/><rect x="1" y="7" width="3.2" height="6" fill="none" stroke="#b3afb3" stroke-width="1"/><rect x="5" y="0.5" width="3.6" height="12.5" fill="#efedef" stroke="#b3afb3" stroke-width="1"/><path d="M12 6.5V11.5M10.4 9.7L12 11.4L13.6 9.7" fill="none" stroke="#b3afb3" stroke-width="0.9"/></svg>
<svg style="left:323.0px;top:134.8px" width="15" height="14" viewBox="0 0 15 14"><path d="M0 7h15" stroke="#b3afb3" stroke-width="1"/><rect x="0.8" y="3.5" width="2.8" height="7" fill="#efedef" stroke="#b3afb3" stroke-width="1"/><rect x="5.8" y="1" width="3.4" height="12" fill="#efedef" stroke="#b3afb3" stroke-width="1"/><rect x="11.4" y="3.5" width="2.8" height="7" fill="#efedef" stroke="#b3afb3" stroke-width="1"/></svg>
<svg style="left:349.0px;top:134.8px" width="13" height="14" viewBox="0 0 13 14"><path d="M6.5 0v14" stroke="#b3afb3" stroke-width="1"/><rect x="3.2" y="0.8" width="6.6" height="2.6" fill="#efedef" stroke="#b3afb3" stroke-width="1"/><rect x="0.5" y="5.6" width="12" height="3.2" fill="#efedef" stroke="#b3afb3" stroke-width="1"/><rect x="3.2" y="11" width="6.6" height="2.6" fill="#efedef" stroke="#b3afb3" stroke-width="1"/></svg>
<svg style="left:373.7px;top:134.8px" width="14.5" height="14" viewBox="0 0 14.5 14"><rect x="0.8" y="0.8" width="12.8" height="12.4" fill="none" stroke="#9a969a" stroke-width="1" stroke-dasharray="1.5 1.2"/><rect x="3" y="3" width="6.5" height="6" fill="none" stroke="#9a969a" stroke-width="1"/><rect x="5.5" y="5.2" width="6" height="6" fill="none" stroke="#9a969a" stroke-width="1"/></svg>
<svg style="left:398.8px;top:135.7px" width="14.4" height="11.6" viewBox="0 0 14.4 11.6"><path d="M0.6 2.2H1.8V0.7H5.2V2.2H13.8V11H0.6z" fill="none" stroke="#444" stroke-width="1.1"/><circle cx="7.6" cy="6.6" r="2.9" fill="none" stroke="#444" stroke-width="1.1"/></svg>
<div class="t" style="left:422.5px;top:133.0px;font-size:10.5px;color:#333;">数字格式</div>
<div class="abs" style="left:469.7px;top:130.3px;width:58.1px;height:19.5px;background:#fdfcfd;border:1px solid #e3d9e0;border-radius:3px"></div>
<div class="t" style="left:472.0px;top:133.0px;font-size:10.3px;color:#333;">常规</div>
<svg style="left:520.1px;top:138.8px" width="5.8" height="3.4" viewBox="0 0 5.8 3.4"><path d="M0.4 0.4L2.90 3.00L5.40 0.4" fill="none" stroke="#505050" stroke-width="1.0" stroke-linecap="round" stroke-linejoin="round"/></svg>
<svg style="left:539.2px;top:135.3px" width="9.5" height="13.5" viewBox="0 0 9.5 13.5"><path d="M0.7 0.8V11.2L3.4 8.6L5.4 13L7 12.3L5 8H8.8z" fill="#fdfcfd" stroke="#444" stroke-width="1"/></svg>
<svg style="left:560.0px;top:135.3px" width="14.5" height="13" viewBox="0 0 14.5 13"><rect x="0" y="0" width="14.2" height="12.8" fill="#fdfcfd"/><rect x="0" y="0" width="14.2" height="4" fill="#2a7fd6"/><rect x="0" y="0" width="4.8" height="12.8" fill="#2a7fd6"/><path d="M4.8 8.4h9.2M9.5 4v8.6M4.8 4h9.2v8.6h-9.2z" fill="none" stroke="#8a868a" stroke-width="0.8"/><path d="M0 4h4.8M0 8.4h4.8M4.8 0v4M9.5 0v4" fill="none" stroke="#fdfcfd" stroke-width="0.7"/><path d="M2.4 0.6v2.8M1.2 1.3l2.4 1.4M3.6 1.3l-2.4 1.4" stroke="#fdfcfd" stroke-width="0.5"/></svg>
<svg style="left:580.1px;top:138.8px" width="5.8" height="3.4" viewBox="0 0 5.8 3.4"><path d="M0.4 0.4L2.90 3.00L5.40 0.4" fill="none" stroke="#505050" stroke-width="1.0" stroke-linecap="round" stroke-linejoin="round"/></svg>
<div class="t" style="left:597.5px;top:132.0px;font-size:6.5px;color:#555;line-height:7px;margin-top:3px">字A</div>
<svg style="left:599.0px;top:142.5px" width="8" height="6" viewBox="0 0 8 6"><path d="M0.6 3L2.8 5.2L7.4 0.6" fill="none" stroke="#2e9d4a" stroke-width="1.2"/></svg>
<svg style="left:620.8px;top:135.3px" width="14.5" height="13.6" viewBox="0 0 14.5 13.6"><path d="M0.5 0.5h13.4v12.6h-13.4zM0.5 3.6h13.4M4 3.6v9.5" fill="#fdfcfd" stroke="#444" stroke-width="1"/><rect x="0.5" y="0.5" width="13.4" height="3.1" fill="#c8c5c8" stroke="#444" stroke-width="1"/><rect x="0.5" y="3.6" width="3.5" height="9.5" fill="#c8c5c8" stroke="#444" stroke-width="1"/><rect x="7.5" y="9" width="2.6" height="4" fill="#2a7fd6"/><rect x="10.4" y="6.2" width="2.8" height="6.8" fill="#2a7fd6"/></svg>
<svg style="left:640.4px;top:138.8px" width="5.8" height="3.4" viewBox="0 0 5.8 3.4"><path d="M0.4 0.4L2.90 3.00L5.40 0.4" fill="none" stroke="#505050" stroke-width="1.0" stroke-linecap="round" stroke-linejoin="round"/></svg>
<div class="abs" style="left:658.5px;top:138.3px;width:6.6px;height:1px;background:#555"></div>
<svg style="left:659.1px;top:141.0px" width="5.4" height="3.1" viewBox="0 0 5.4 3.1"><path d="M0.4 0.4L2.70 2.70L5.00 0.4" fill="none" stroke="#555" stroke-width="1.0" stroke-linecap="round" stroke-linejoin="round"/></svg>
<div class="abs" style="left:7px;top:164px;width:90px;height:21px;background:#fdfcfd;border:1px solid #e6dfe5;border-radius:4px"></div>
<div class="t" style="left:12px;top:168px;font-size:11px;color:#333">B7</div>
<svg style="left:83px;top:172px" width="9" height="6" viewBox="0 0 9 6"><path d="M0.5 0.5l4 4 4-4" fill="none" stroke="#444" stroke-width="1.1"/></svg>
<div class="abs" style="left:105px;top:169px;width:2px;height:2px;background:#777;box-shadow:0 4px 0 #777,0 8px 0 #777"></div>
<div class="abs" style="left:115px;top:164px;width:65px;height:21px;background:#fdfcfd;border:1px solid #e6dfe5;border-radius:4px"></div>
<svg style="left:121px;top:169px" width="12" height="11" viewBox="0 0 12 11"><path d="M1 0.5l9 10M10 0.5l-9 10" fill="none" stroke="#b5b0b4" stroke-width="1"/></svg>
<svg style="left:140px;top:169px" width="15" height="11" viewBox="0 0 15 11"><path d="M0.5 6l4 4.5 10-10" fill="none" stroke="#b5b0b4" stroke-width="1"/></svg>
<div class="t" style="left:163px;top:166px;font-size:14px;line-height:16px;font-family:'Liberation Serif',serif;font-style:italic;font-weight:bold;color:#333">f<span style="font-size:12.5px">x</span></div>
<div class="abs" style="left:185px;top:164px;width:910px;height:21px;background:#fdfcfd;border:1px solid #e6dfe5;border-radius:4px"></div>
<div class="t" style="left:195px;top:168px;font-size:11.7px;color:#333">5449.248</div>
<div class="abs" style="left:27px;top:210px;width:1060px;height:460px;background:#fefdfe"></div>
<svg style="left:11px;top:196px" width="14" height="13" viewBox="0 0 14 13"><path d="M14 0v13h-14z" fill="#dcd9dc"/></svg>
<div class="ch" style="left:27.7px;width:57.8px">A</div>
<div class="ch" style="left:85.5px;width:84.9px">B</div>
<div class="ch" style="left:170.4px;width:94.4px">C</div>
<div class="ch" style="left:264.8px;width:84.6px">D</div>
<div class="ch" style="left:349.4px;width:94.9px">E</div>
<div class="ch" style="left:444.3px;width:65.9px">F</div>
<div class="ch" style="left:510.2px;width:65.9px">G</div>
<div class="ch" style="left:576.1px;width:65.9px">H</div>
<div class="ch" style="left:642.0px;width:65.9px">I</div>
<div class="ch" style="left:707.9px;width:65.9px">J</div>
<div class="ch" style="left:773.8px;width:65.9px">K</div>
<div class="ch" style="left:839.7px;width:65.9px">L</div>
<div class="ch" style="left:905.6px;width:65.9px">M</div>
<div class="ch" style="left:971.5px;width:65.9px">N</div>
<div class="ch" style="left:1037.4px;width:65.9px">O</div>
<div class="abs" style="left:27px;top:210px;width:1060px;height:1px;background:#d9d3d8"></div>
<div class="abs" style="left:27px;top:210px;width:1px;height:460px;background:#dcd6db"></div>
<div class="abs" style="left:85.5px;top:196px;width:1px;height:14px;background:#e6dfe5"></div>
<div class="abs" style="left:170.4px;top:196px;width:1px;height:14px;background:#e6dfe5"></div>
<div class="abs" style="left:264.8px;top:196px;width:1px;height:14px;background:#e6dfe5"></div>
<div class="abs" style="left:349.4px;top:196px;width:1px;height:14px;background:#e6dfe5"></div>
<div class="abs" style="left:444.3px;top:196px;width:1px;height:14px;background:#e6dfe5"></div>
<div class="abs" style="left:510.2px;top:196px;width:1px;height:14px;background:#e6dfe5"></div>
<div class="abs" style="left:576.1px;top:196px;width:1px;height:14px;background:#e6dfe5"></div>
<div class="abs" style="left:642.0px;top:196px;width:1px;height:14px;background:#e6dfe5"></div>
<div class="abs" style="left:707.9px;top:196px;width:1px;height:14px;background:#e6dfe5"></div>
<div class="abs" style="left:773.8px;top:196px;width:1px;height:14px;background:#e6dfe5"></div>
<div class="abs" style="left:839.7px;top:196px;width:1px;height:14px;background:#e6dfe5"></div>
<div class="abs" style="left:905.6px;top:196px;width:1px;height:14px;background:#e6dfe5"></div>
<div class="abs" style="left:971.5px;top:196px;width:1px;height:14px;background:#e6dfe5"></div>
<div class="abs" style="left:1037.4px;top:196px;width:1px;height:14px;background:#e6dfe5"></div>
<div class="abs" style="left:1103.3px;top:196px;width:1px;height:14px;background:#e6dfe5"></div>
<div class="hl" style="left:28px;top:228.2px;width:1060px"></div>
<div class="hl" style="left:28px;top:248.6px;width:1060px"></div>
<div class="hl" style="left:28px;top:270.8px;width:1060px"></div>
<div class="hl" style="left:28px;top:293.1px;width:1060px"></div>
<div class="hl" style="left:28px;top:314.6px;width:1060px"></div>
<div class="hl" style="left:28px;top:336.1px;width:1060px"></div>
<div class="hl" style="left:28px;top:357.6px;width:1060px"></div>
<div class="hl" style="left:28px;top:379.1px;width:1060px"></div>
<div class="hl" style="left:28px;top:400.6px;width:1060px"></div>
<div class="hl" style="left:28px;top:422.0px;width:1060px"></div>
<div class="hl" style="left:28px;top:443.5px;width:1060px"></div>
<div class="hl" style="left:28px;top:465.0px;width:1060px"></div>
<div class="hl" style="left:28px;top:486.5px;width:1060px"></div>
<div class="hl" style="left:28px;top:508.0px;width:1060px"></div>
<div class="hl" style="left:28px;top:529.5px;width:1060px"></div>
<div class="hl" style="left:28px;top:551.0px;width:1060px"></div>
<div class="hl" style="left:28px;top:572.5px;width:1060px"></div>
<div class="hl" style="left:28px;top:594.0px;width:1060px"></div>
<div class="hl" style="left:28px;top:615.5px;width:1060px"></div>
<div class="hl" style="left:28px;top:636.9px;width:1060px"></div>
<div class="hl" style="left:28px;top:655.9px;width:1060px"></div>
<div class="hl" style="left:28px;top:674.9px;width:1060px"></div>
<div class="vl" style="left:85.0px;top:211px;height:460px"></div>
<div class="vl" style="left:169.9px;top:211px;height:460px"></div>
<div class="vl" style="left:264.3px;top:211px;height:460px"></div>
<div class="vl" style="left:348.9px;top:211px;height:460px"></div>
<div class="vl" style="left:443.8px;top:211px;height:460px"></div>
<div class="vl" style="left:509.7px;top:211px;height:460px"></div>
<div class="vl" style="left:575.6px;top:211px;height:460px"></div>
<div class="vl" style="left:641.5px;top:211px;height:460px"></div>
<div class="vl" style="left:707.4px;top:211px;height:460px"></div>
<div class="vl" style="left:773.3px;top:211px;height:460px"></div>
<div class="vl" style="left:839.2px;top:211px;height:460px"></div>
<div class="vl" style="left:905.1px;top:211px;height:460px"></div>
<div class="vl" style="left:971.0px;top:211px;height:460px"></div>
<div class="vl" style="left:1036.9px;top:211px;height:460px"></div>
<div class="vl" style="left:1102.8px;top:211px;height:460px"></div>
<div class="rh" style="top:210.5px;height:18.2px;line-height:19.2px">1</div>
<div class="abs" style="left:8px;top:228.2px;width:19px;height:1px;background:#e9e2e8"></div>
<div class="rh" style="top:228.7px;height:20.4px;line-height:21.4px">2</div>
<div class="abs" style="left:8px;top:248.6px;width:19px;height:1px;background:#e9e2e8"></div>
<div class="rh" style="top:249.1px;height:22.2px;line-height:23.2px">3</div>
<div class="abs" style="left:8px;top:270.8px;width:19px;height:1px;background:#e9e2e8"></div>
<div class="rh" style="top:271.3px;height:22.3px;line-height:23.3px">4</div>
<div class="abs" style="left:8px;top:293.1px;width:19px;height:1px;background:#e9e2e8"></div>
<div class="rh" style="top:293.6px;height:21.5px;line-height:22.5px">5</div>
<div class="abs" style="left:8px;top:314.6px;width:19px;height:1px;background:#e9e2e8"></div>
<div class="rh" style="top:315.1px;height:21.5px;line-height:22.5px">6</div>
<div class="abs" style="left:8px;top:336.1px;width:19px;height:1px;background:#e9e2e8"></div>
<div class="rh" style="top:336.6px;height:21.5px;line-height:22.5px">7</div>
<div class="abs" style="left:8px;top:357.6px;width:19px;height:1px;background:#e9e2e8"></div>
<div class="rh" style="top:358.1px;height:21.5px;line-height:22.5px">8</div>
<div class="abs" style="left:8px;top:379.1px;width:19px;height:1px;background:#e9e2e8"></div>
<div class="rh" style="top:379.6px;height:21.5px;line-height:22.5px">9</div>
<div class="abs" style="left:8px;top:400.6px;width:19px;height:1px;background:#e9e2e8"></div>
<div class="rh" style="top:401.1px;height:21.5px;line-height:22.5px">10</div>
<div class="abs" style="left:8px;top:422.0px;width:19px;height:1px;background:#e9e2e8"></div>
<div class="rh" style="top:422.5px;height:21.5px;line-height:22.5px">11</div>
<div class="abs" style="left:8px;top:443.5px;width:19px;height:1px;background:#e9e2e8"></div>
<div class="rh" style="top:444.0px;height:21.5px;line-height:22.5px">12</div>
<div class="abs" style="left:8px;top:465.0px;width:19px;height:1px;background:#e9e2e8"></div>
<div class="rh" style="top:465.5px;height:21.5px;line-height:22.5px">13</div>
<div class="abs" style="left:8px;top:486.5px;width:19px;height:1px;background:#e9e2e8"></div>
<div class="rh" style="top:487.0px;height:21.5px;line-height:22.5px">14</div>
<div class="abs" style="left:8px;top:508.0px;width:19px;height:1px;background:#e9e2e8"></div>
<div class="rh" style="top:508.5px;height:21.5px;line-height:22.5px">15</div>
<div class="abs" style="left:8px;top:529.5px;width:19px;height:1px;background:#e9e2e8"></div>
<div class="rh" style="top:530.0px;height:21.5px;line-height:22.5px">16</div>
<div class="abs" style="left:8px;top:551.0px;width:19px;height:1px;background:#e9e2e8"></div>
<div class="rh" style="top:551.5px;height:21.5px;line-height:22.5px">17</div>
<div class="abs" style="left:8px;top:572.5px;width:19px;height:1px;background:#e9e2e8"></div>
<div class="rh" style="top:573.0px;height:21.5px;line-height:22.5px">18</div>
<div class="abs" style="left:8px;top:594.0px;width:19px;height:1px;background:#e9e2e8"></div>
<div class="rh" style="top:594.5px;height:21.5px;line-height:22.5px">19</div>
<div class="abs" style="left:8px;top:615.5px;width:19px;height:1px;background:#e9e2e8"></div>
<div class="rh" style="top:616.0px;height:21.5px;line-height:22.5px">20</div>
<div class="abs" style="left:8px;top:636.9px;width:19px;height:1px;background:#e9e2e8"></div>
<div class="rh" style="top:637.4px;height:19.0px;line-height:20.0px">21</div>
<div class="abs" style="left:8px;top:655.9px;width:19px;height:1px;background:#e9e2e8"></div>
<div class="cell" style="left:30px;top:211.5px;line-height:19px;font-size:14.6px;letter-spacing:0.3px"><span style="font-weight:bold;font-size:14.2px">1. 0</span><span style="font-weight:500">值替换</span></div>
<div class="abs" style="left:28px;top:248.2px;width:416.3px;height:45.4px;background:#3a3838"></div>
<div class="cell" style="left:85px;top:250px;width:359px;text-align:center;line-height:21px;font-weight:bold;color:#fff;font-size:15px">价格变动</div>
<div class="cell" style="left:31px;top:271.5px;line-height:22px;font-weight:bold;color:#fff;font-size:17px">Model</div>
<div class="cell" style="left:85.5px;top:271.5px;width:84.9px;text-align:center;line-height:22px;font-weight:bold;color:#fff;font-size:16.4px">11月</div>
<div class="cell" style="left:170.4px;top:271.5px;width:94.4px;text-align:center;line-height:22px;font-weight:bold;color:#fff;font-size:16.4px">12月</div>
<div class="cell" style="left:264.8px;top:271.5px;width:84.6px;text-align:center;line-height:22px;font-weight:bold;color:#fff;font-size:16.4px">1月</div>
<div class="cell" style="left:349.4px;top:271.5px;width:94.9px;text-align:center;line-height:22px;font-weight:bold;color:#fff;font-size:16.4px">2月</div>
<div class="cell" style="left:30px;top:293.6px;line-height:22.5px">A1</div>
<div class="cell num" style="left:85.5px;top:293.6px;width:81.9px;line-height:22.5px">4354.924</div>
<div class="cell num" style="left:170.4px;top:293.6px;width:91.4px;line-height:22.5px">0</div>
<div class="cell num" style="left:264.8px;top:293.6px;width:81.6px;line-height:22.5px">0</div>
<div class="cell num" style="left:349.4px;top:293.6px;width:91.9px;line-height:22.5px">4368.796</div>
<div class="abs" style="left:28px;top:315.1px;width:416.3px;height:21.5px;background:#aeaaaa"></div>
<div class="cell" style="left:30px;top:315.1px;line-height:22.5px">A2</div>
<div class="cell num" style="left:85.5px;top:315.1px;width:81.9px;line-height:22.5px">4600.404</div>
<div class="cell num" style="left:170.4px;top:315.1px;width:91.4px;line-height:22.5px">0</div>
<div class="cell num" style="left:264.8px;top:315.1px;width:81.6px;line-height:22.5px">0</div>
<div class="cell num" style="left:349.4px;top:315.1px;width:91.9px;line-height:22.5px">4645.556</div>
<div class="cell" style="left:30px;top:336.6px;line-height:22.5px">A3</div>
<div class="cell num" style="left:85.5px;top:336.6px;width:81.9px;line-height:22.5px">5449.248</div>
<div class="cell num" style="left:170.4px;top:336.6px;width:91.4px;line-height:22.5px">0</div>
<div class="cell num" style="left:264.8px;top:336.6px;width:81.6px;line-height:22.5px">0</div>
<div class="cell num" style="left:349.4px;top:336.6px;width:91.9px;line-height:22.5px">5665.352</div>
<div class="abs" style="left:28px;top:358.1px;width:416.3px;height:21.5px;background:#aeaaaa"></div>
<div class="cell" style="left:30px;top:358.1px;line-height:22.5px">A4</div>
<div class="cell num" style="left:85.5px;top:358.1px;width:81.9px;line-height:22.5px">5658.892</div>
<div class="cell num" style="left:170.4px;top:358.1px;width:91.4px;line-height:22.5px">0</div>
<div class="cell num" style="left:264.8px;top:358.1px;width:81.6px;line-height:22.5px">0</div>
<div class="cell num" style="left:349.4px;top:358.1px;width:91.9px;line-height:22.5px">5904.508</div>
<div class="cell" style="left:30px;top:379.6px;line-height:22.5px">A5</div>
<div class="cell num" style="left:85.5px;top:379.6px;width:81.9px;line-height:22.5px">0</div>
<div class="cell num" style="left:170.4px;top:379.6px;width:91.4px;line-height:22.5px">0</div>
<div class="cell num" style="left:264.8px;top:379.6px;width:81.6px;line-height:22.5px">0</div>
<div class="cell num" style="left:349.4px;top:379.6px;width:91.9px;line-height:22.5px">0</div>
<div class="abs" style="left:28px;top:401.1px;width:416.3px;height:21.5px;background:#aeaaaa"></div>
<div class="cell" style="left:30px;top:401.1px;line-height:22.5px">A6</div>
<div class="cell num" style="left:85.5px;top:401.1px;width:81.9px;line-height:22.5px">0</div>
<div class="cell num" style="left:170.4px;top:401.1px;width:91.4px;line-height:22.5px">0</div>
<div class="cell num" style="left:264.8px;top:401.1px;width:81.6px;line-height:22.5px">0</div>
<div class="cell num" style="left:349.4px;top:401.1px;width:91.9px;line-height:22.5px">0</div>
<div class="cell" style="left:30px;top:422.5px;line-height:22.5px">A7</div>
<div class="cell num" style="left:85.5px;top:422.5px;width:81.9px;line-height:22.5px">4129.98</div>
<div class="cell num" style="left:170.4px;top:422.5px;width:91.4px;line-height:22.5px">0</div>
<div class="cell num" style="left:264.8px;top:422.5px;width:81.6px;line-height:22.5px">0</div>
<div class="cell num" style="left:349.4px;top:422.5px;width:91.9px;line-height:22.5px">4231.096</div>
<div class="abs" style="left:28px;top:444.0px;width:416.3px;height:21.5px;background:#aeaaaa"></div>
<div class="cell" style="left:30px;top:444.0px;line-height:22.5px">A8</div>
<div class="cell num" style="left:85.5px;top:444.0px;width:81.9px;line-height:22.5px">4436.728</div>
<div class="cell num" style="left:170.4px;top:444.0px;width:91.4px;line-height:22.5px">0</div>
<div class="cell num" style="left:264.8px;top:444.0px;width:81.6px;line-height:22.5px">0</div>
<div class="cell num" style="left:349.4px;top:444.0px;width:91.9px;line-height:22.5px">4570.348</div>
<div class="cell" style="left:30px;top:465.5px;line-height:22.5px">A9</div>
<div class="cell num" style="left:85.5px;top:465.5px;width:81.9px;line-height:22.5px">5249.056</div>
<div class="cell num" style="left:170.4px;top:465.5px;width:91.4px;line-height:22.5px">0</div>
<div class="cell num" style="left:264.8px;top:465.5px;width:81.6px;line-height:22.5px">0</div>
<div class="cell num" style="left:349.4px;top:465.5px;width:91.9px;line-height:22.5px">5529.624</div>
<div class="abs" style="left:28px;top:487.0px;width:416.3px;height:21.5px;background:#aeaaaa"></div>
<div class="cell" style="left:30px;top:487.0px;line-height:22.5px">A10</div>
<div class="cell num" style="left:85.5px;top:487.0px;width:81.9px;line-height:22.5px">5521.26</div>
<div class="cell num" style="left:170.4px;top:487.0px;width:91.4px;line-height:22.5px">0</div>
<div class="cell num" style="left:264.8px;top:487.0px;width:81.6px;line-height:22.5px">0</div>
<div class="cell num" style="left:349.4px;top:487.0px;width:91.9px;line-height:22.5px">5831.204</div>
<div class="cell" style="left:30px;top:508.5px;line-height:22.5px">A11</div>
<div class="cell num" style="left:85.5px;top:508.5px;width:81.9px;line-height:22.5px">0</div>
<div class="cell num" style="left:170.4px;top:508.5px;width:91.4px;line-height:22.5px">0</div>
<div class="cell num" style="left:264.8px;top:508.5px;width:81.6px;line-height:22.5px">0</div>
<div class="cell num" style="left:349.4px;top:508.5px;width:91.9px;line-height:22.5px">8796.208</div>
<div class="abs" style="left:28px;top:530.0px;width:416.3px;height:21.5px;background:#aeaaaa"></div>
<div class="cell" style="left:30px;top:530.0px;line-height:22.5px">A12</div>
<div class="cell num" style="left:85.5px;top:530.0px;width:81.9px;line-height:22.5px">0</div>
<div class="cell num" style="left:170.4px;top:530.0px;width:91.4px;line-height:22.5px">0</div>
<div class="cell num" style="left:264.8px;top:530.0px;width:81.6px;line-height:22.5px">0</div>
<div class="cell num" style="left:349.4px;top:530.0px;width:91.9px;line-height:22.5px">9452.884</div>
<div class="cell" style="left:30px;top:551.5px;line-height:22.5px">A13</div>
<div class="cell num" style="left:85.5px;top:551.5px;width:81.9px;line-height:22.5px">0</div>
<div class="cell num" style="left:170.4px;top:551.5px;width:91.4px;line-height:22.5px">15439.4</div>
<div class="cell num" style="left:264.8px;top:551.5px;width:81.6px;line-height:22.5px">0</div>
<div class="cell num" style="left:349.4px;top:551.5px;width:91.9px;line-height:22.5px">16801.78</div>
<div class="abs" style="left:28px;top:573.0px;width:416.3px;height:21.5px;background:#aeaaaa"></div>
<div class="cell" style="left:30px;top:573.0px;line-height:22.5px">A14</div>
<div class="cell num" style="left:85.5px;top:573.0px;width:81.9px;line-height:22.5px">0</div>
<div class="cell num" style="left:170.4px;top:573.0px;width:91.4px;line-height:22.5px">17851.496</div>
<div class="cell num" style="left:264.8px;top:573.0px;width:81.6px;line-height:22.5px">0</div>
<div class="cell num" style="left:349.4px;top:573.0px;width:91.9px;line-height:22.5px">19460.716</div>
<div class="cell" style="left:30px;top:594.5px;line-height:22.5px">A15</div>
<div class="cell num" style="left:85.5px;top:594.5px;width:81.9px;line-height:22.5px">0</div>
<div class="cell num" style="left:170.4px;top:594.5px;width:91.4px;line-height:22.5px">0</div>
<div class="cell num" style="left:264.8px;top:594.5px;width:81.6px;line-height:22.5px">5964.076</div>
<div class="cell num" style="left:349.4px;top:594.5px;width:91.9px;line-height:22.5px">5962.036</div>
<div class="abs" style="left:28px;top:616.0px;width:416.3px;height:21.5px;background:#aeaaaa"></div>
<div class="cell" style="left:30px;top:616.0px;line-height:22.5px">A20</div>
<div class="cell num" style="left:85.5px;top:616.0px;width:81.9px;line-height:22.5px">0</div>
<div class="cell num" style="left:170.4px;top:616.0px;width:91.4px;line-height:22.5px">0</div>
<div class="cell num" style="left:264.8px;top:616.0px;width:81.6px;line-height:22.5px">0</div>
<div class="cell num" style="left:349.4px;top:616.0px;width:91.9px;line-height:22.5px">11090.664</div>
<div class="abs" style="left:84.6px;top:248.2px;width:1.6px;height:389.3px;background:#111"></div>
</body></html>
